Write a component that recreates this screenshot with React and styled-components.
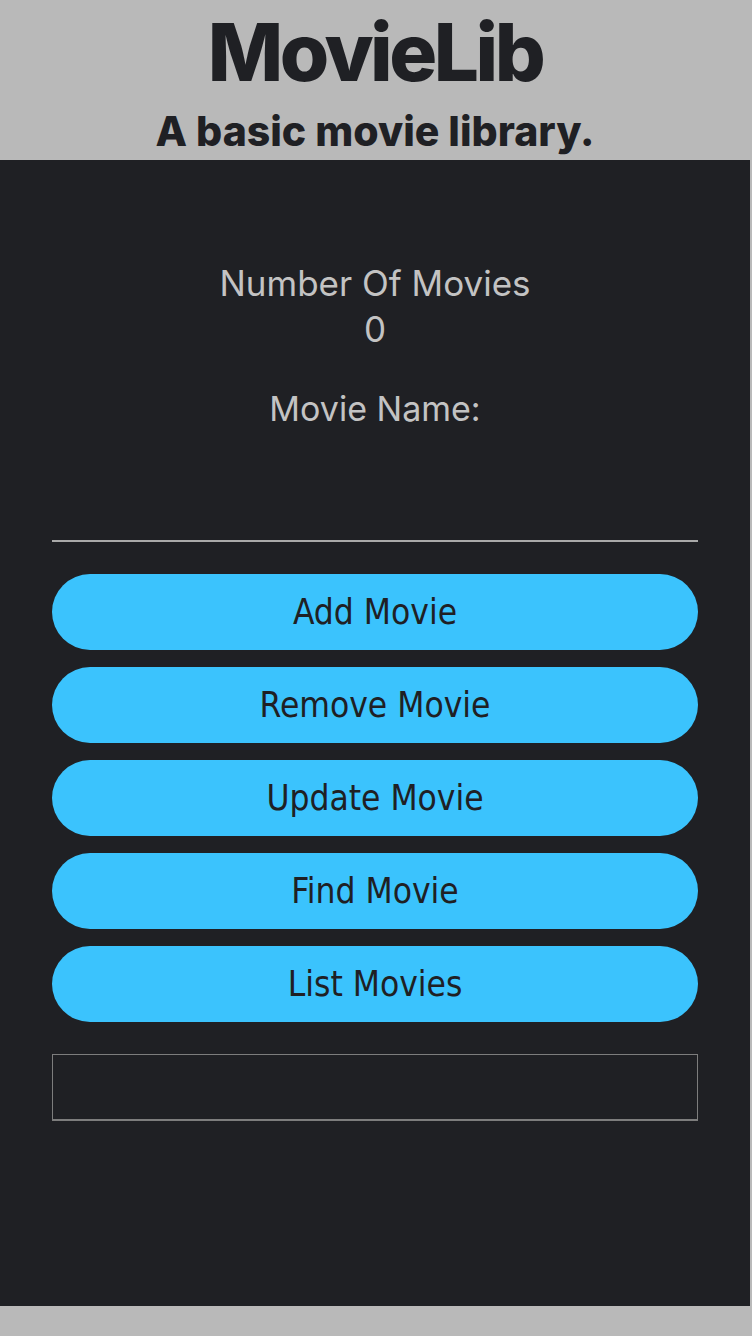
import styled, { createGlobalStyle } from 'styled-components'

const GlobalStyle = createGlobalStyle`
  html, body {
    margin: 0;
    padding: 0;
    background-color: #b9b9b9;
  }
`

const Page = styled.div`
  display: flex;
  flex-direction: column;
  width: 750px;
  min-height: 1336px;
  background-color: #b9b9b9;
`

const Header = styled.header`
  display: flex;
  flex-direction: column;
  align-items: center;
  height: 160px;
  box-sizing: border-box;
  padding-top: 8px;
  color: #1f2024;
  font-family: Inter, 'Liberation Sans', sans-serif;
`

const Title = styled.h1`
  margin: 0;
  font-size: 80px;
  font-weight: 800;
  letter-spacing: -3.5px;
  line-height: 88px;
`

const Subtitle = styled.h2`
  margin: 11px 0 0;
  font-size: 41px;
  font-weight: 800;
  letter-spacing: 0;
  line-height: 48px;
`

const Main = styled.main`
  display: flex;
  flex-direction: column;
  align-items: center;
  height: 1146px;
  box-sizing: border-box;
  padding: 100px 52px 0;
  background-color: #1f2024;
`

const Stat = styled.div`
  color: #c3c3c3;
  font-family: Inter, 'Liberation Sans', sans-serif;
  font-size: 35px;
  line-height: 46px;
  text-align: center;
`

const Label = styled(Stat)`
  margin-top: 34px;
  font-size: 34px;
`

const NameInput = styled.input`
  width: 100%;
  height: 40px;
  margin-top: 70px;
  box-sizing: border-box;
  border: none;
  border-bottom: 2px solid #a9a9a9;
  background: transparent;
  outline: none;
`

const Buttons = styled.div`
  display: flex;
  flex-direction: column;
  gap: 17px;
  width: 100%;
  margin-top: 32px;
`

const Button = styled.button`
  height: 76px;
  border: none;
  border-radius: 38px;
  background-color: #3bc3fd;
  color: #1f2024;
  font-family: 'DejaVu Sans Condensed', 'DejaVu Sans', sans-serif;
  font-size: 35px;
  cursor: pointer;
`

const Output = styled.div`
  width: 100%;
  height: 67px;
  margin-top: 32px;
  box-sizing: border-box;
  border: 1px solid #7d7d7d;
  border-bottom-width: 2px;
`

const actions = ['Add Movie', 'Remove Movie', 'Update Movie', 'Find Movie', 'List Movies']

const App = () => {
  return (
    <Page>
      <GlobalStyle />
      <Header>
        <Title>MovieLib</Title>
        <Subtitle>A basic movie library.</Subtitle>
      </Header>
      <Main>
        <Stat>
          Number Of Movies
          <br />0
        </Stat>
        <Label>Movie Name:</Label>
        <NameInput type='text' />
        <Buttons>
          {actions.map((a) => (
            <Button key={a}>{a}</Button>
          ))}
        </Buttons>
        <Output />
      </Main>
    </Page>
  )
}

export default App
